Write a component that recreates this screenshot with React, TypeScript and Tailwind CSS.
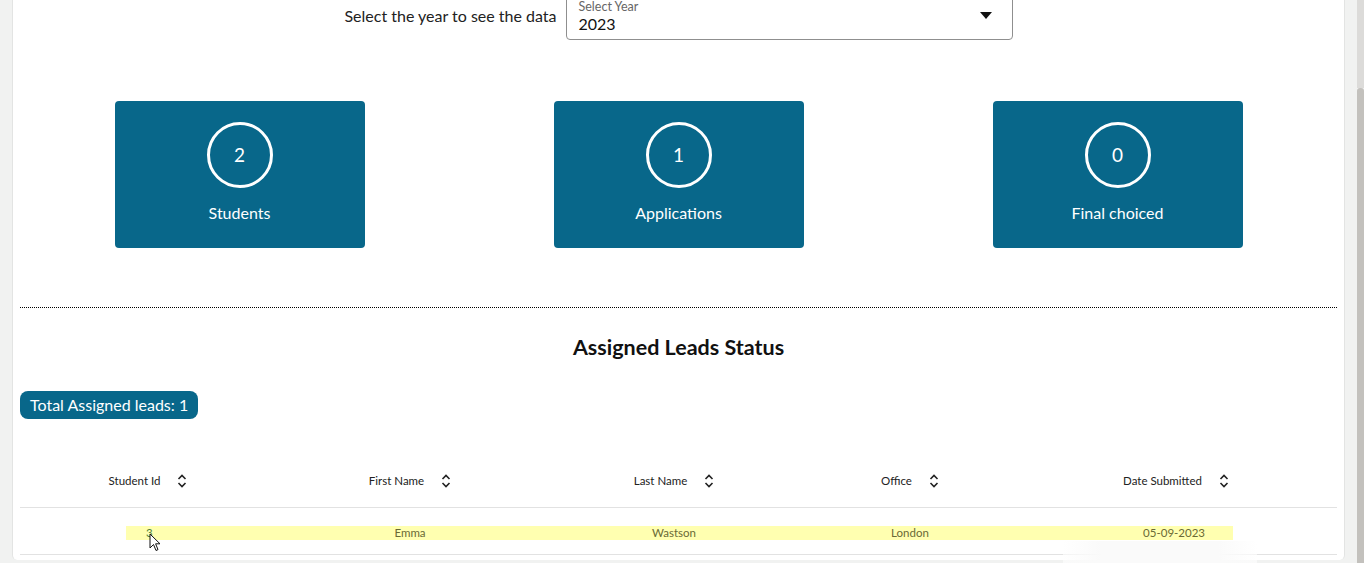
import React from "react";

const font = { fontFamily: "Lato, 'Noto Sans', sans-serif" };

function SortIcon() {
  return (
    <svg width="10" height="14" viewBox="0 0 10 14" className="shrink-0">
      <path d="M1.5 5 L5 1.5 L8.5 5" fill="none" stroke="#222" strokeWidth="1.6" />
      <path d="M1.5 9 L5 12.5 L8.5 9" fill="none" stroke="#222" strokeWidth="1.6" />
    </svg>
  );
}

function StatCard({ value, label }: { value: string; label: string }) {
  return (
    <div className="w-[250px] h-[147px] rounded-[4px] bg-[#08678a] flex flex-col items-center pt-[21px]">
      <div className="w-[66px] h-[66px] rounded-full border-[3px] border-white flex items-center justify-center text-white text-[19px]">
        {value}
      </div>
      <div className="mt-[15px] text-white text-[16px] leading-[20px]">{label}</div>
    </div>
  );
}

function Header({ label }: { label: string }) {
  return (
    <div className="flex items-center justify-center gap-[17px] text-[11.5px] text-[#222]">
      <span>{label}</span>
      <SortIcon />
    </div>
  );
}

export default function App() {
  return (
    <div className="w-[1364px] h-[563px] overflow-hidden flex bg-[#f1f2f1]" style={font}>
      <div className="flex-1 px-[12px] flex flex-col">
        <div className="h-[560px] bg-white rounded-b-[5px] border-l border-r border-[#e3e4e3] px-[7px] flex flex-col relative">
          <div className="flex justify-center items-center gap-[9px] -mt-[12px]">
            <span className="text-[16px] text-[#222] mt-[3px]">Select the year to see the data</span>
            <div className="w-[447px] h-[52px] border border-[#8f8f8f] rounded-[4px] px-[12px] pt-[11px] flex items-start justify-between">
              <div className="flex flex-col">
                <span className="text-[12.5px] leading-[14px] text-[#666]">Select Year</span>
                <span className="text-[16px] leading-[19px] text-[#111]">2023</span>
              </div>
              <svg width="12" height="7" viewBox="0 0 12 7" className="mt-[12px] mr-[8px]">
                <path d="M0 0 L12 0 L6 7 Z" fill="#111" />
              </svg>
            </div>
          </div>

          <div className="flex justify-around mt-[61px]">
            <StatCard value="2" label="Students" />
            <StatCard value="1" label="Applications" />
            <StatCard value="0" label="Final choiced" />
          </div>

          <div className="mt-[59px] border-t border-dotted border-black" />

          <h2 className="mt-[26px] text-center text-[21.5px] leading-[26px] font-bold text-[#111]">
            Assigned Leads Status
          </h2>

          <div className="mt-[31px] flex">
            <div className="h-[28px] px-[10px] rounded-[8px] bg-[#08678a] text-white text-[16px] flex items-center">
              Total Assigned leads: 1
            </div>
          </div>

          <div className="mt-[36px] grid grid-cols-[256px_268px_260px_212px_320px] h-[53px] items-center border-b border-[#e2e2e2]">
            <Header label="Student Id" />
            <Header label="First Name" />
            <Header label="Last Name" />
            <Header label="Office" />
            <Header label="Date Submitted" />
          </div>

          <div className="h-[47px] border-b border-[#e2e2e2] flex items-start pt-[18px]">
            <div className="ml-[106px] w-[1107px] h-[14px] bg-[#ffffb0] grid grid-cols-[150px_268px_260px_212px_217px] items-center text-[11.5px] leading-[14px] text-[#6a6a35]">
              <span className="pl-[20px] text-[#4f7f3c]">3</span>
              <span className="text-center">Emma</span>
              <span className="text-center">Wastson</span>
              <span className="text-center">London</span>
              <span className="text-right pr-[28px]">05-09-2023</span>
            </div>
          </div>

          <div className="absolute left-[1050px] top-[541px] w-[194px] h-[24px] bg-[linear-gradient(to_right,rgba(255,255,255,0.6),#fafafa_20%,#fafafa_80%,rgba(255,255,255,0.6))]" />

          <svg className="absolute left-[136px] top-[533px]" width="12" height="19" viewBox="0 0 12 19">
            <path d="M1 1 L1 15 L4.5 11.5 L7 17.5 L9 16.6 L6.6 10.8 L11 10.8 Z" fill="white" stroke="#111" strokeWidth="1" strokeLinejoin="round" />
          </svg>
        </div>
      </div>
      <div className="w-[7px] flex flex-col">
        <div className="h-[88px] bg-[#dcdbd9]" />
        <div className="flex-1 bg-[#c3c1bd] rounded-t-[3px]" />
      </div>
    </div>
  );
}
